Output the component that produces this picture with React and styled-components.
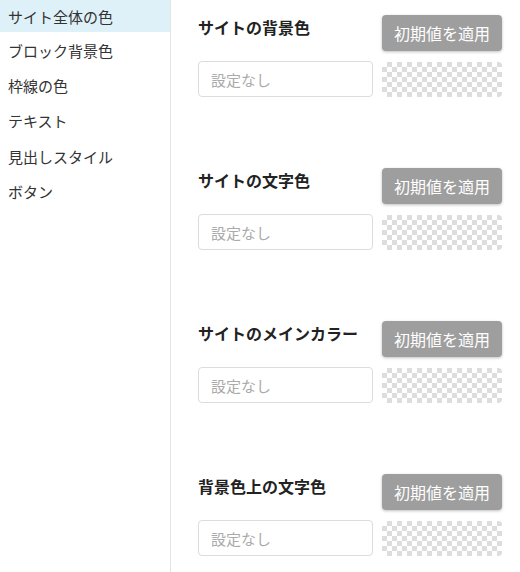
import React from "react";
import styled, {createGlobalStyle} from "styled-components";

const GlobalStyle = createGlobalStyle`
    html, body {
        margin: 0;
        padding: 0;
        background: #ffffff;
    }
    body {
        font-family: "Noto Sans CJK JP", "Noto Sans", sans-serif;
        color: #333333;
    }
`;

const menuItems = ["サイト全体の色", "ブロック背景色", "枠線の色", "テキスト", "見出しスタイル", "ボタン"];

const sections = ["サイトの背景色", "サイトの文字色", "サイトのメインカラー", "背景色上の文字色"];

const App = () => {
    return <Wrapper>
        <GlobalStyle/>
        <Sidebar>
            {menuItems.map((item, i) => (
                <MenuItem key={item} $active={i === 0}>{item}</MenuItem>
            ))}
        </Sidebar>
        <Main>
            {sections.map((title) => (
                <Section key={title}>
                    <Title>{title}</Title>
                    <ResetButton>初期値を適用</ResetButton>
                    <Input type="text" placeholder="設定なし"/>
                    <Swatch/>
                </Section>
            ))}
        </Main>
    </Wrapper>
}

const Wrapper = styled.div`
    width: 520px;
    height: 572px;
    display: flex;
    flex-direction: row;
    overflow: hidden;
`;

const Sidebar = styled.div`
    width: 170px;
    flex-shrink: 0;
    border-right: 1px solid #e3e3e3;
    display: flex;
    flex-direction: column;
`;

const MenuItem = styled.div`
    height: 35.4px;
    box-sizing: border-box;
    padding: 0 8px;
    display: flex;
    align-items: center;
    font-size: 15px;
    color: #333333;
    background: ${(p) => (p.$active ? "#dff1f8" : "transparent")};
    margin-top: ${(p) => (p.$active ? "-3px" : "0")};
    padding-top: ${(p) => (p.$active ? "3px" : "0")};
`;

const Main = styled.div`
    flex: 1;
    padding: 15px 18px 0 27px;
    display: flex;
    flex-direction: column;
    gap: 71px;
`;

const Section = styled.div`
    display: grid;
    grid-template-columns: 175px 120px;
    grid-template-rows: 36px 36px;
    column-gap: 9px;
    row-gap: 10px;
`;

const Title = styled.h2`
    margin: 0;
    padding-top: 1px;
    font-size: 16px;
    font-weight: 700;
    line-height: 22px;
    color: #222222;
    white-space: nowrap;
`;

const ResetButton = styled.button`
    width: 120px;
    height: 36px;
    border: none;
    border-radius: 4px;
    background: #9e9e9e;
    color: #ffffff;
    font-family: inherit;
    font-size: 16px;
    padding: 0;
    box-shadow: 0 1px 3px rgba(0, 0, 0, 0.25);
    cursor: pointer;
`;

const Input = styled.input`
    width: 175px;
    height: 36px;
    box-sizing: border-box;
    border: 1px solid #dcdcdc;
    border-radius: 4px;
    padding: 0 12px;
    font-family: inherit;
    font-size: 15px;
    outline: none;
    &::placeholder {
        color: #aaaaaa;
    }
`;

const Swatch = styled.div`
    width: 120px;
    height: 35px;
    margin-top: 1px;
    border-radius: 4px;
    background-color: #ffffff;
    background-image:
        linear-gradient(45deg, #dddddd 25%, transparent 25%, transparent 75%, #dddddd 75%),
        linear-gradient(45deg, #dddddd 25%, transparent 25%, transparent 75%, #dddddd 75%);
    background-size: 10px 10px;
    background-position: 0 0, 5px 5px;
`;

export default App
